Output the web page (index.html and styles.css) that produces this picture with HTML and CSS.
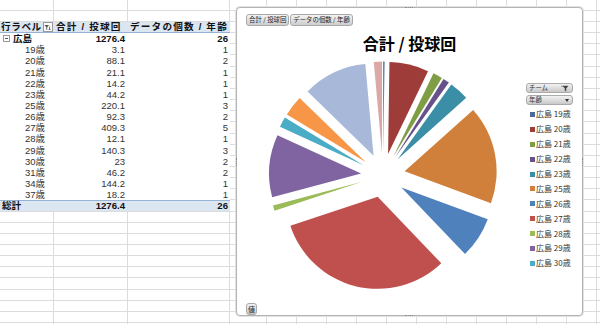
FILE: index.html
```html
<!DOCTYPE html>
<html lang="ja">
<head>
  <meta charset="UTF-8" />
  <meta name="viewport" content="width=device-width, initial-scale=1.0"/>
  <title>ピボットグラフ</title>
  <link rel="stylesheet" href="styles.css">
</head>
<body>

<!-- シート -->
<div class="sheet">
  <div class="pivot">
    <div class="pv-row pv-head">
      <div class="cell label-cell">行ラベル <span class="filter-box"><svg width="7" height="7" viewBox="0 0 7 7"><path d="M0.5 1H5L3.2 3.2V6L2.3 5.4V3.2Z" fill="#555"/><path d="M5.6 2.5V6M4.8 5.2L5.6 6L6.4 5.2" stroke="#555" stroke-width="0.8" fill="none"/></svg></span></div>
      <div class="cell">合計 / 投球回</div>
      <div class="cell">データの個数 / 年齢</div>
    </div>
    <div class="pv-row pv-group">
      <div class="cell"><span class="minus-box"></span>広島</div>
      <div class="cell num">1276.4</div>
      <div class="cell num">26</div>
    </div>
    <div class="pv-row"><div class="cell sub">19歳</div><div class="cell num">3.1</div><div class="cell num">1</div></div>
    <div class="pv-row"><div class="cell sub">20歳</div><div class="cell num">88.1</div><div class="cell num">2</div></div>
    <div class="pv-row"><div class="cell sub">21歳</div><div class="cell num">21.1</div><div class="cell num">1</div></div>
    <div class="pv-row"><div class="cell sub">22歳</div><div class="cell num">14.2</div><div class="cell num">1</div></div>
    <div class="pv-row"><div class="cell sub">23歳</div><div class="cell num">44.2</div><div class="cell num">1</div></div>
    <div class="pv-row"><div class="cell sub">25歳</div><div class="cell num">220.1</div><div class="cell num">3</div></div>
    <div class="pv-row"><div class="cell sub">26歳</div><div class="cell num">92.3</div><div class="cell num">2</div></div>
    <div class="pv-row"><div class="cell sub">27歳</div><div class="cell num">409.3</div><div class="cell num">5</div></div>
    <div class="pv-row"><div class="cell sub">28歳</div><div class="cell num">12.1</div><div class="cell num">1</div></div>
    <div class="pv-row"><div class="cell sub">29歳</div><div class="cell num">140.3</div><div class="cell num">3</div></div>
    <div class="pv-row"><div class="cell sub">30歳</div><div class="cell num">23</div><div class="cell num">2</div></div>
    <div class="pv-row"><div class="cell sub">31歳</div><div class="cell num">46.2</div><div class="cell num">2</div></div>
    <div class="pv-row"><div class="cell sub">34歳</div><div class="cell num">144.2</div><div class="cell num">1</div></div>
    <div class="pv-row"><div class="cell sub">37歳</div><div class="cell num">18.2</div><div class="cell num">1</div></div>
    <div class="pv-row pv-total">
      <div class="cell">総計</div>
      <div class="cell num">1276.4</div>
      <div class="cell num">26</div>
    </div>
  </div>
</div>

<!-- グラフ -->
<div class="chart">
  <div class="field-bar">
    <span class="field-btn">合計 / 投球回</span>
    <span class="field-btn">データの個数 / 年齢</span>
  </div>
  <div class="chart-title">合計 / 投球回</div>
  <div class="chart-body">
    <svg id="pie" class="pie" width="283" height="240" viewBox="0 0 283 240"></svg>
    <div class="legend">
      <div class="legend-btn">チーム <svg width="8" height="7" viewBox="0 0 8 7"><path d="M1.5 0.8H7.5L5.2 3.4V6.4L3.8 5.6V3.4Z" fill="#444"/><path d="M0.3 1.2H1.6" stroke="#444" stroke-width="0.8"/></svg></div>
      <div class="legend-btn">年齢 <span class="caret"></span></div>
      <ul class="legend-list" id="legend"></ul>
    </div>
  </div>
  <span class="values-btn">値</span>

  <span class="grip grip-top"></span>
  <span class="grip grip-bottom"></span>
  <span class="grip grip-left"></span>
  <span class="grip grip-right"></span>
</div>

<script>
  const data = [
    ["19歳", 3.1, "#4a6b9a"],
    ["20歳", 88.1, "#9e3c3a"],
    ["21歳", 21.1, "#7f9d45"],
    ["22歳", 14.2, "#66518a"],
    ["23歳", 44.2, "#3a8ea5"],
    ["25歳", 220.1, "#d0803b"],
    ["26歳", 92.3, "#4f81bd"],
    ["27歳", 409.3, "#c0504d"],
    ["28歳", 12.1, "#9bbb59"],
    ["29歳", 140.3, "#8064a2"],
    ["30歳", 23, "#4bacc6"],
    ["31歳", 46.2, "#f79646"],
    ["34歳", 144.2, "#a8b8d8"],
    ["37歳", 18.2, "#dba8a8"]
  ];

  const total = data.reduce((s, d) => s + d[1], 0);
  const cx = 146, cy = 122.5, r = 92, ex = 22;
  const pie = document.getElementById("pie");
  let angle = 0;

  data.forEach(d => {
    const a0 = angle;
    const a1 = angle + d[1] / total * Math.PI * 2;
    angle = a1;
    const mid = (a0 + a1) / 2;
    const ox = cx + ex * Math.sin(mid), oy = cy - ex * Math.cos(mid);
    const x0 = ox + r * Math.sin(a0), y0 = oy - r * Math.cos(a0);
    const x1 = ox + r * Math.sin(a1), y1 = oy - r * Math.cos(a1);
    const large = a1 - a0 > Math.PI ? 1 : 0;
    const path = document.createElementNS("http://www.w3.org/2000/svg", "path");
    path.setAttribute("d", `M${ox} ${oy}L${x0} ${y0}A${r} ${r} 0 ${large} 1 ${x1} ${y1}Z`);
    path.setAttribute("fill", d[2]);
    pie.appendChild(path);
  });

  // 凡例は見えている分だけ
  const legend = document.getElementById("legend");
  data.slice(0, 11).forEach(d => {
    const li = document.createElement("li");
    li.innerHTML = `<i style="background:${d[2]}"></i>広島 ${d[0]}`;
    legend.appendChild(li);
  });
</script>

</body>
</html>
```

FILE: styles.css
```css
body {
  margin: 0;
  width: 600px;
  height: 324px;
  overflow: hidden;
  position: relative;
  font-family: "Noto Sans CJK JP", "Noto Sans", sans-serif;
  color: #222;
}

/* Sheet grid */
.sheet {
  height: 324px;
  box-sizing: border-box;
  padding-top: 22px;
  background-color: #fff;
  background-image:
    linear-gradient(to right, transparent 53px, #dadcdd 53px, #dadcdd 54px, transparent 54px, transparent 127px, #dadcdd 127px, #dadcdd 128px, transparent 128px, transparent 229px, #dadcdd 229px, #dadcdd 230px, transparent 230px),
    repeating-linear-gradient(to right, transparent 0, transparent 29px, #dadcdd 29px, #dadcdd 30px),
    repeating-linear-gradient(to bottom, transparent 0, transparent 10.15px, #dadcdd 10.15px, #dadcdd 11.15px);
  background-size: 100% 100%, 363px 100%, 100% 100%;
  background-position: 0 0, 237px 0, 0 -0.3px;
  background-repeat: no-repeat;
}

.pivot {
  width: 230px;
  font-family: "Liberation Sans", "Noto Sans CJK JP", sans-serif;
}

.pv-row {
  display: grid;
  grid-template-columns: 54px 74px 102px;
  height: 11.15px;
  box-sizing: border-box;
  background: #fff;
  font-size: 9.5px;
  line-height: 11px;
  color: #333;
}

.cell {
  display: flex;
  align-items: center;
  white-space: nowrap;
}

.cell.num {
  justify-content: flex-end;
  padding-right: 3px;
}

.cell.num:last-child {
  padding-right: 2px;
}

.cell.sub {
  padding-left: 25px;
}

.pv-head {
  background: #dce6f1;
  border-bottom: 1px solid #95b3d7;
  font-size: 9.6px;
  line-height: 10px;
  letter-spacing: 1.2px;
  font-weight: bold;
  color: #111;
}

.pv-head .cell {
  padding-left: 2px;
}

.pv-head .label-cell {
  padding-left: 1px;
  letter-spacing: 0.6px;
}

.filter-box {
  display: inline-flex;
  align-items: center;
  justify-content: center;
  width: 8px;
  height: 8px;
  margin-left: 1px;
  border: 1px solid #9a9a9a;
  background: #fafafa;
}

.pv-group {
  font-weight: bold;
  font-size: 9.6px;
  color: #111;
}

.minus-box {
  display: inline-block;
  position: relative;
  width: 5px;
  height: 5px;
  margin: 0 3px 0 3px;
  border: 1px solid #999;
}

.minus-box::after {
  content: "";
  position: absolute;
  left: 1px;
  top: 2px;
  width: 3px;
  height: 1px;
  background: #555;
}

.pv-total {
  background: #dce6f1;
  border-top: 1px solid #95b3d7;
  font-weight: bold;
  font-size: 9.6px;
  line-height: 10px;
  color: #111;
}

.pv-total .cell:first-child {
  padding-left: 2px;
}

/* Chart window */
.chart {
  position: absolute;
  left: 236px;
  top: 7px;
  width: 347px;
  height: 309px;
  box-sizing: border-box;
  border: 1px solid #b4b4b4;
  border-radius: 4px;
  box-shadow: 0 0 0 1px #e2e2e2;
  background: #fff;
}

.field-bar {
  display: flex;
  gap: 1px;
  padding: 6px 0 0 9px;
}

.field-btn {
  display: inline-block;
  height: 12px;
  padding: 0 2px;
  box-sizing: border-box;
  font-size: 6.4px;
  line-height: 10px;
  color: #222;
  background: linear-gradient(#f4f4f4, #cdcdcd);
  border: 1px solid #a9a9a9;
  border-radius: 3px;
  white-space: nowrap;
}

.chart-title {
  margin-top: 7px;
  height: 20px;
  font-size: 16px;
  line-height: 20px;
  font-weight: bold;
  text-align: center;
  color: #000;
}

.chart-body {
  display: flex;
  align-items: flex-start;
}

.pie {
  display: block;
  flex: none;
}

.legend {
  margin: 30px 0 0 6px;
  width: 47px;
}

.legend-btn {
  display: flex;
  align-items: center;
  justify-content: space-between;
  height: 10px;
  margin-bottom: 2px;
  padding: 0 3px 0 2px;
  box-sizing: border-box;
  font-size: 6.4px;
  line-height: 8px;
  color: #333;
  background: linear-gradient(#f2f2f2, #c9c9c9);
  border: 1px solid #ababab;
  border-radius: 3px;
}

.caret {
  width: 0;
  height: 0;
  border-left: 2.5px solid transparent;
  border-right: 2.5px solid transparent;
  border-top: 3px solid #333;
}

.legend-list {
  list-style: none;
  margin: 1px 0 0 0;
  padding: 0;
}

.legend-list li {
  display: flex;
  align-items: center;
  height: 14.9px;
  padding-left: 4px;
  font-size: 8px;
  line-height: 10px;
  color: #333;
  white-space: nowrap;
}

.legend-list i {
  display: inline-block;
  width: 5px;
  height: 5px;
  margin-right: 1px;
}

.values-btn {
  display: inline-flex;
  align-items: center;
  justify-content: center;
  width: 11px;
  height: 12px;
  margin: 7px 0 0 9px;
  box-sizing: border-box;
  font-size: 7px;
  line-height: 8px;
  color: #222;
  background: linear-gradient(#f2f2f2, #c9c9c9);
  border: 1px solid #a9a9a9;
  border-radius: 3px;
}

/* Resize grips */
.grip {
  position: absolute;
  border: 0 dotted #8a8a8a;
}

.grip-top,
.grip-bottom {
  left: 168px;
  width: 8px;
  border-top-width: 1px;
}

.grip-top {
  top: -1px;
}

.grip-bottom {
  bottom: -1px;
}

.grip-left,
.grip-right {
  top: 150px;
  height: 8px;
  border-left-width: 1px;
}

.grip-left {
  left: -1px;
}

.grip-right {
  right: -1px;
}
```
